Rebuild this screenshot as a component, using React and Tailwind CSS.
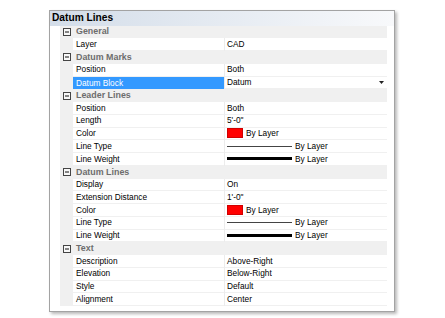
import React from "react";

const rows = [
  { c: "General" },
  { l: "Layer", v: "CAD" },
  { c: "Datum Marks" },
  { l: "Position", v: "Both" },
  { l: "Datum Block", v: "Datum", sel: true },
  { c: "Leader Lines" },
  { l: "Position", v: "Both" },
  { l: "Length", v: "5'-0\"" },
  { l: "Color", t: "color" },
  { l: "Line Type", t: "thin" },
  { l: "Line Weight", t: "thick" },
  { c: "Datum Lines" },
  { l: "Display", v: "On" },
  { l: "Extension Distance", v: "1'-0\"" },
  { l: "Color", t: "color" },
  { l: "Line Type", t: "thin" },
  { l: "Line Weight", t: "thick" },
  { c: "Text" },
  { l: "Description", v: "Above-Right" },
  { l: "Elevation", v: "Below-Right" },
  { l: "Style", v: "Default" },
  { l: "Alignment", v: "Center" },
];

function Minus() {
  return (
    <svg width="8" height="8" viewBox="0 0 8 8" className="block">
      <rect x="0.5" y="0.5" width="7" height="7" fill="#f7f7f7" stroke="#444" />
      <line x1="2" y1="4" x2="6" y2="4" stroke="#111" />
    </svg>
  );
}

function Value({ r }) {
  if (r.t === "color")
    return (
      <div className="flex items-center gap-[3px]">
        <div className="w-[16px] h-[10px] bg-[#ff0000] border border-[#d00000]" />
        <span>By Layer</span>
      </div>
    );
  if (r.t === "thin")
    return (
      <div className="flex items-center gap-[3px]">
        <div className="w-[65px] h-[1px] bg-[#444]" />
        <span>By Layer</span>
      </div>
    );
  if (r.t === "thick")
    return (
      <div className="flex items-center gap-[3px]">
        <div className="w-[65px] h-[3px] bg-black" />
        <span>By Layer</span>
      </div>
    );
  return <span>{r.v}</span>;
}

export default function App() {
  return (
    <div className="w-[445px] h-[318px] bg-white pl-[49px] pt-[10px] font-['Liberation_Sans',Arial,sans-serif]">
      <div className="w-[346px] h-[302px] border border-[#a3a3a3] bg-white shadow-[2px_2px_3px_rgba(0,0,0,0.28)] flex flex-col">
        <div className="h-[14.5px] shrink-0 flex items-center pl-[2px] bg-gradient-to-r from-[#d3dde9] to-[#f8f9fb] text-[10.2px] font-bold text-black leading-none">
          Datum Lines
        </div>
        <div className="flex flex-col pl-[10px] pr-[7px]">
          {rows.map((r, i) =>
            r.c ? (
              <div key={i} className="h-[12.75px] flex items-center bg-[#f0f0f0]">
                <div className="w-[13px] flex justify-center pl-[1px]">
                  <Minus />
                </div>
                <span className="pl-[3px] text-[8.9px] font-bold text-[#6d6d6d] leading-none">{r.c}</span>
              </div>
            ) : (
              <div key={i} className="h-[12.75px] flex text-[8.3px] leading-none text-black">
                <div className="w-[13px] bg-[#f0f0f0]" />
                <div
                  className={
                    r.sel
                      ? "w-[151px] flex items-center pl-[3px] bg-[#3399ff] text-white"
                      : "w-[151px] flex items-center pl-[3px] bg-white border-b border-[#f0f0f0]"
                  }
                >
                  {r.l}
                </div>
                <div className="w-[1px] bg-[#ececec]" />
                <div className="flex-1 flex items-center justify-between pl-[2px] pr-[3px] border-b border-[#f0f0f0]">
                  <Value r={r} />
                  {r.sel && (
                    <svg width="5" height="3" viewBox="0 0 5 3" className="block">
                      <polygon points="0,0 5,0 2.5,3" fill="#222" />
                    </svg>
                  )}
                </div>
              </div>
            )
          )}
        </div>
      </div>
    </div>
  );
}
